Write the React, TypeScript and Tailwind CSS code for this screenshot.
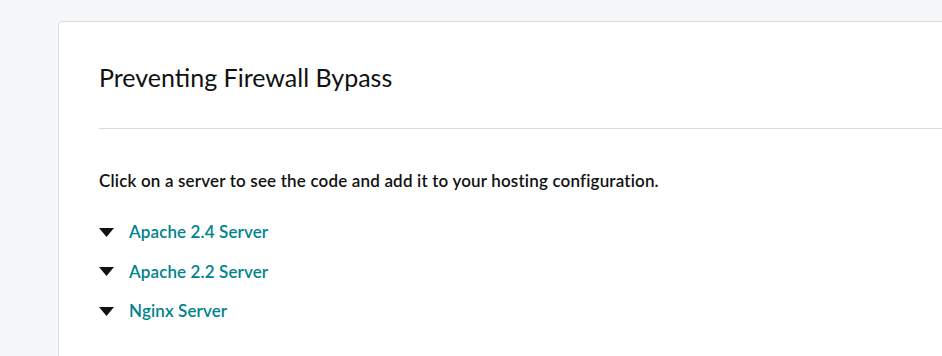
import React from 'react';

const servers = ['Apache 2.4 Server', 'Apache 2.2 Server', 'Nginx Server'];

const Caret: React.FC = () => (
  <svg width="15" height="9" viewBox="0 0 15 9" className="shrink-0">
    <path d="M0 0h15L7.5 9z" fill="#111111" />
  </svg>
);

const App: React.FC = () => (
  <div className="h-[356px] w-[942px] overflow-hidden bg-[#f5f7f8] pt-[21px] pl-[58px] font-['Lato',sans-serif] text-[#111111]">
    <section className="w-[1000px] h-[400px] rounded-tl-[4px] border border-[#d6dce0] bg-white pl-[40px]">
      <h2 className="pt-[38px] pb-[34px] text-[25px] leading-[34px] font-normal">Preventing Firewall Bypass</h2>
      <div className="h-px bg-[#d6dce0]" />
      <p className="pt-[40px] text-[17px] leading-[24px] font-semibold tracking-[0.17px]">
        Click on a server to see the code and add it to your hosting configuration.
      </p>
      <ul className="mt-[27px] flex flex-col gap-[15.5px]">
        {servers.map((s) => (
          <li key={s} className="flex items-center gap-[15px] h-[24px]">
            <Caret />
            <a href="#" className="text-[17px] leading-[24px] font-semibold tracking-[0.12px] text-[#00838c]">
              {s}
            </a>
          </li>
        ))}
      </ul>
    </section>
  </div>
);

export default App;
